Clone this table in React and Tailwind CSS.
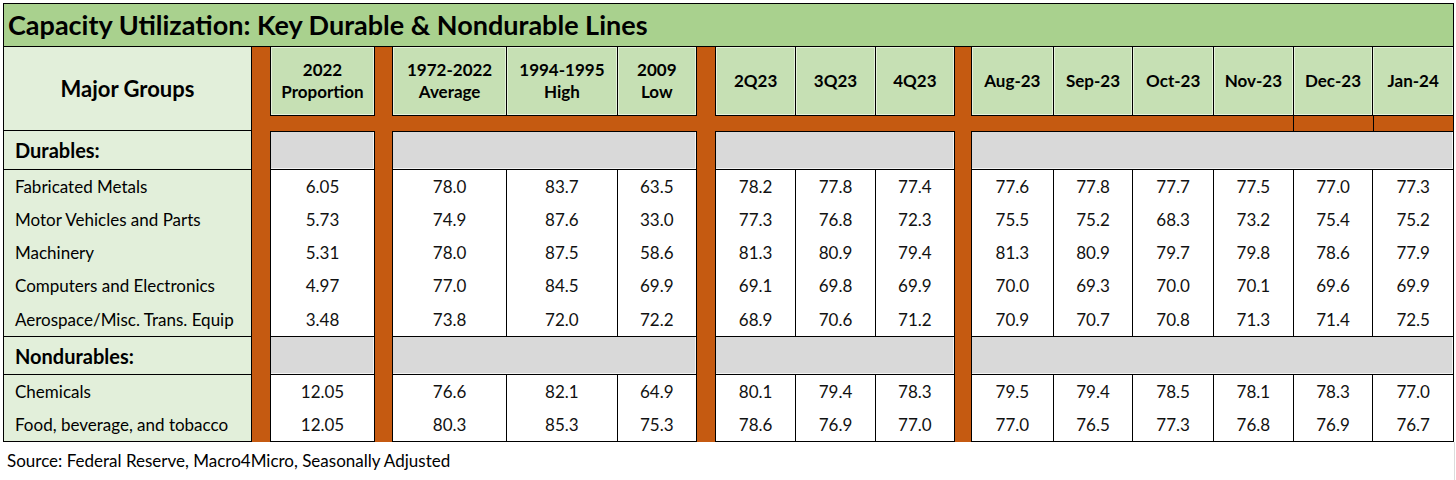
const groups = [
  { cols: [{ w: 105, head: ["2022", "Proportion"] }] },
  {
    cols: [
      { w: 114, head: ["1972-2022", "Average"] },
      { w: 111, head: ["1994-1995", "High"] },
      { w: 80, head: ["2009", "Low"] },
    ],
  },
  {
    cols: [
      { w: 80, head: ["2Q23"] },
      { w: 80, head: ["3Q23"] },
      { w: 80, head: ["4Q23"] },
    ],
  },
  {
    cols: [
      { w: 81, head: ["Aug-23"] },
      { w: 80, head: ["Sep-23"] },
      { w: 81, head: ["Oct-23"] },
      { w: 80, head: ["Nov-23"] },
      { w: 80, head: ["Dec-23"], boxed: true },
      { w: 81, head: ["Jan-24"], boxed: true },
    ],
  },
];

const spacers = [18, 17, 18, 16];

const durables = [
  ["Fabricated Metals", "6.05", "78.0", "83.7", "63.5", "78.2", "77.8", "77.4", "77.6", "77.8", "77.7", "77.5", "77.0", "77.3"],
  ["Motor Vehicles and Parts", "5.73", "74.9", "87.6", "33.0", "77.3", "76.8", "72.3", "75.5", "75.2", "68.3", "73.2", "75.4", "75.2"],
  ["Machinery", "5.31", "78.0", "87.5", "58.6", "81.3", "80.9", "79.4", "81.3", "80.9", "79.7", "79.8", "78.6", "77.9"],
  ["Computers and Electronics", "4.97", "77.0", "84.5", "69.9", "69.1", "69.8", "69.9", "70.0", "69.3", "70.0", "70.1", "69.6", "69.9"],
  ["Aerospace/Misc. Trans. Equip", "3.48", "73.8", "72.0", "72.2", "68.9", "70.6", "71.2", "70.9", "70.7", "70.8", "71.3", "71.4", "72.5"],
];

const nondurables = [
  ["Chemicals", "12.05", "76.6", "82.1", "64.9", "80.1", "79.4", "78.3", "79.5", "79.4", "78.5", "78.1", "78.3", "77.0"],
  ["Food, beverage, and tobacco", "12.05", "80.3", "85.3", "75.3", "78.6", "76.9", "77.0", "77.0", "76.5", "77.3", "76.8", "76.9", "76.7"],
];

function LabelColumn() {
  return (
    <div className="w-[249px] flex flex-col bg-[#e2efda]">
      <div className="h-[84px] border-x border-b border-black flex items-center justify-center text-[22px] font-bold">
        Major Groups
      </div>
      <div className="h-[39px] border-x border-b border-black flex items-center pl-[11px] text-[20px] font-bold">
        Durables:
      </div>
      <div className="h-[166px] border-x border-black flex flex-col pl-[11px] text-[17px]">
        {durables.map((r) => (
          <div key={r[0]} className="flex-1 flex items-center">{r[0]}</div>
        ))}
      </div>
      <div className="h-[39px] border border-black flex items-center pl-[11px] text-[20px] font-bold">
        Nondurables:
      </div>
      <div className="h-[67px] border-x border-b border-black flex flex-col pl-[11px] text-[17px]">
        {nondurables.map((r) => (
          <div key={r[0]} className="flex-1 flex items-center">{r[0]}</div>
        ))}
      </div>
    </div>
  );
}

function Group({ group, offset }) {
  const width = group.cols.reduce((s, c) => s + c.w, 0);
  return (
    <div className="flex flex-col" style={{ width }}>
      {/* header */}
      <div className="h-[69px] flex border-x border-b border-black">
        {group.cols.map((c, i) => (
          <div
            key={c.head.join()}
            className={`flex-1 bg-[#c6e0b4] shadow-[inset_0_0_0_1px_#e6f2dc] flex flex-col items-center justify-center text-[17px] font-bold leading-[22px] ${i > 0 ? "border-l border-black" : ""}`}
            style={{ flexBasis: c.w }}
          >
            {c.head.map((t) => (
              <div key={t}>{t}</div>
            ))}
          </div>
        ))}
      </div>
      {/* orange strip */}
      <div className="h-[15px] flex">
        {group.cols.map((c, i) => (
          <div
            key={c.head.join()}
            className={`${c.boxed ? "border-l border-black" : ""} ${c.boxed && i === group.cols.length - 1 ? "border-r" : ""}`}
            style={{ width: c.w }}
          />
        ))}
      </div>
      <div className="h-[39px] bg-[#d9d9d9] border border-black shadow-[inset_-1px_-1px_0_#f4f4f4]" />
      <DataBlock group={group} offset={offset} rows={durables} h="h-[166px] border-x" />
      <div className="h-[39px] bg-[#d9d9d9] border border-black shadow-[inset_-1px_-1px_0_#f4f4f4]" />
      <DataBlock group={group} offset={offset} rows={nondurables} h="h-[67px] border-x border-b" />
    </div>
  );
}

function DataBlock({ group, offset, rows, h }) {
  return (
    <div className={`${h} border-black bg-white flex`}>
      {group.cols.map((c, i) => (
        <div
          key={c.head.join()}
          className={`flex flex-col text-[17px] text-[#111] ${i > 0 ? "border-l border-black" : ""}`}
          style={{ width: c.w }}
        >
          {rows.map((r) => (
            <div key={r[0]} className="flex-1 flex items-center justify-center">
              {r[1 + offset + i]}
            </div>
          ))}
        </div>
      ))}
    </div>
  );
}

export default function App() {
  let offset = 0;
  const offsets = groups.map((g) => {
    const o = offset;
    offset += g.cols.length;
    return o;
  });

  return (
    <div className="w-[1456px] h-[480px] bg-white text-black font-['Lato',sans-serif]">
      <div className="pl-[3px] pt-[3px]">
        <div className="w-[1451px]">
          <div className="h-[44px] bg-[#a9d18e] border border-black flex items-center pl-[4px] text-[27px] font-bold">
            Capacity Utilization: Key Durable &amp; Nondurable Lines
          </div>
          <div className="flex h-[395px] bg-[#c55a11]">
            <LabelColumn />
            {groups.map((g, gi) => (
              <div key={gi} className="flex">
                <div style={{ width: spacers[gi] }} />
                <Group group={g} offset={offsets[gi]} />
              </div>
            ))}
          </div>
        </div>
      </div>
      <div className="h-[38px] w-[1455px] border-r border-[#dcdcdc] flex items-center pl-[7px] text-[17px]">
        Source: Federal Reserve, Macro4Micro, Seasonally Adjusted
      </div>
    </div>
  );
}
